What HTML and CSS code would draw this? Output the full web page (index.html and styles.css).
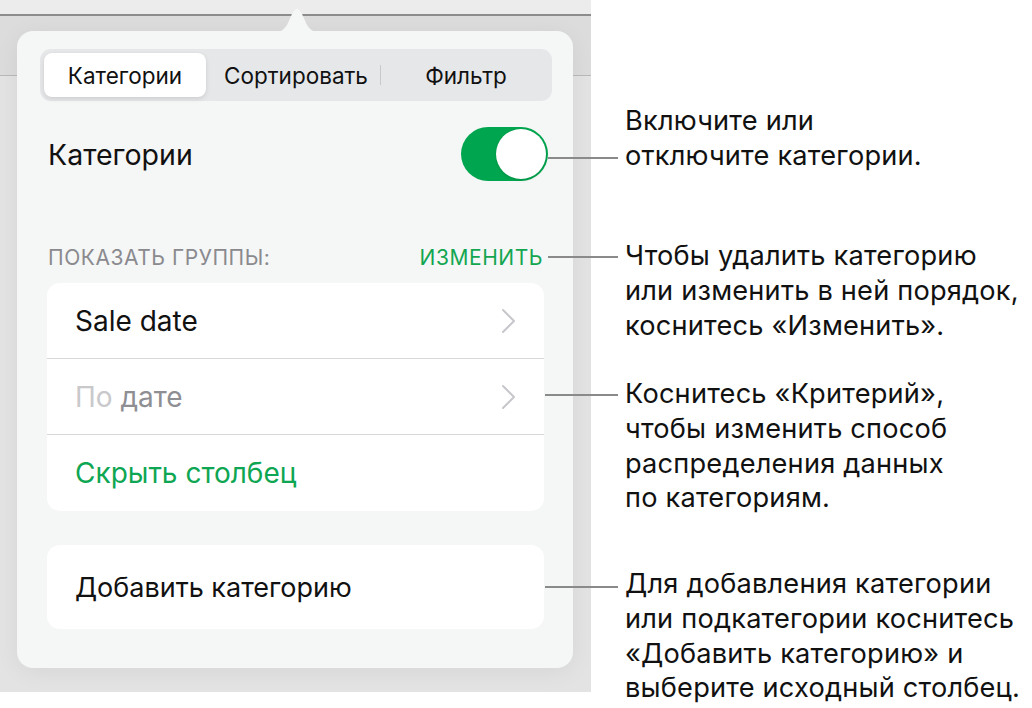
FILE: index.html
```html
<!DOCTYPE html>
<html lang="ru">
<head>
<meta charset="utf-8">
<title>Категории</title>
<link rel="stylesheet" href="styles.css">
</head>
<body>
<div class="page">
  <div class="device">
    <div class="popover">
      <div class="segmented">
        <div class="seg seg-active">Категории</div>
        <div class="seg">Сортировать</div>
        <div class="seg seg-last">Фильтр</div>
      </div>

      <div class="toggle-row">
        <span class="toggle-label">Категории</span>
        <span class="toggle"><span class="knob"></span></span>
      </div>

      <div class="section-head">
        <span class="section-title">ПОКАЗАТЬ ГРУППЫ:</span>
        <span class="section-action">ИЗМЕНИТЬ</span>
      </div>

      <div class="card">
        <div class="row">
          <span class="row-text">Sale date</span>
          <svg class="chev" width="15" height="26" viewBox="0 0 15 26"><path d="M2 2 L13 13 L2 24" fill="none" stroke="#c7c7cc" stroke-width="2" stroke-linecap="round" stroke-linejoin="round"/></svg>
        </div>
        <div class="row">
          <span class="row-text"><span class="faint">По</span> <span class="muted">дате</span></span>
          <svg class="chev" width="15" height="26" viewBox="0 0 15 26"><path d="M2 2 L13 13 L2 24" fill="none" stroke="#c7c7cc" stroke-width="2" stroke-linecap="round" stroke-linejoin="round"/></svg>
        </div>
        <div class="row row-last">
          <span class="row-text green">Скрыть столбец</span>
        </div>
      </div>

      <div class="card card-add">
        <span class="row-text">Добавить категорию</span>
      </div>
    </div>
  </div>

  <div class="callout c1">
    <span class="leader l1"></span>
    <p>Включите или<br>отключите категории.</p>
  </div>
  <div class="callout c2">
    <span class="leader l2"></span>
    <p>Чтобы удалить категорию<br>или изменить в ней порядок,<br>коснитесь «Изменить».</p>
  </div>
  <div class="callout c3">
    <span class="leader l3"></span>
    <p>Коснитесь «Критерий»,<br>чтобы изменить способ<br>распределения данных<br>по категориям.</p>
  </div>
  <div class="callout c4">
    <span class="leader l4"></span>
    <p>Для добавления категории<br>или подкатегории коснитесь<br>«Добавить категорию» и<br>выберите исходный столбец.</p>
  </div>
</div>
</body>
</html>
```

FILE: styles.css
```css
html, body {
  margin: 0;
  padding: 0;
  background: #ffffff;
}

body {
  font-family: Inter, Roboto, "Noto Sans", "Liberation Sans", sans-serif;
  color: #111111;
  width: 1032px;
  height: 708px;
  overflow: hidden;
}

.page {
  position: relative;
  width: 1032px;
  height: 708px;
}

.device {
  width: 591px;
  height: 692px;
  box-sizing: border-box;
  padding: 31px 0 0 17px;
  background:
    linear-gradient(#ececec 0, #ececec 14px, #8c8c8c 14px, #8c8c8c 16px, #dcdcdc 16px, #dcdcdc 75px, #b9b9b9 75px, #b9b9b9 76px, #e3e3e3 76px, #e3e3e3 100%);
}

.popover {
  position: relative;
  width: 556px;
  height: 637px;
  box-sizing: border-box;
  padding: 18px 21px 0 23px;
  background: #f5f6f6;
  border-radius: 16px;
  box-shadow: 0 4px 24px rgba(0, 0, 0, 0.06);
}

.popover::before {
  content: "";
  position: absolute;
  left: 252px;
  top: -22px;
  width: 56px;
  height: 24px;
  background: #f5f6f6;
  clip-path: path("M0 24 C10 24 14 22 18 16 L23 5 C25 1 27 0 28 0 C29 0 31 1 33 5 L38 16 C42 22 46 24 56 24 Z");
}

/* segmented control */
.segmented {
  display: grid;
  grid-template-columns: 1fr 1fr 1fr;
  height: 52px;
  box-sizing: border-box;
  padding: 4px;
  background: #e6e7e9;
  border-radius: 11px;
}

.seg {
  display: flex;
  align-items: center;
  justify-content: center;
  font-size: 22.5px;
  color: #111111;
  position: relative;
}

.seg-active {
  background: #ffffff;
  border-radius: 8px;
  margin-right: 6px;
  box-shadow: 0 2px 5px rgba(0, 0, 0, 0.10), 0 0 1px rgba(0, 0, 0, 0.08);
}

.seg-last {
  padding-left: 4px;
}

.seg-last::before {
  content: "";
  position: absolute;
  left: 0;
  top: 12px;
  bottom: 12px;
  width: 1px;
  background: #c9c9cc;
}

/* toggle row */
.toggle-row {
  display: flex;
  align-items: center;
  justify-content: space-between;
  margin-top: 26px;
  height: 54px;
  padding: 0 4px 0 8px;
}

.toggle-label {
  font-size: 28.5px;
  color: #111111;
}

.toggle {
  display: flex;
  align-items: center;
  justify-content: flex-end;
  width: 87px;
  height: 54px;
  box-sizing: border-box;
  padding: 2px;
  background: #00a64f;
  border-radius: 27px;
}

.knob {
  width: 50px;
  height: 50px;
  border-radius: 50%;
  background: #ffffff;
  box-shadow: 0 1px 3px rgba(0, 0, 0, 0.15);
}

/* section header */
.section-head {
  display: flex;
  justify-content: space-between;
  align-items: center;
  margin-top: 66px;
  height: 20px;
  padding: 0 9px 0 8px;
  font-size: 21px;
  letter-spacing: 0.55px;
}

.section-title {
  color: #8a8a8e;
}

.section-action {
  color: #13a651;
}

/* cards */
.card {
  margin: 16px 8px 0 7px;
  background: #ffffff;
  border-radius: 13px;
}

.row {
  display: flex;
  align-items: center;
  justify-content: space-between;
  height: 75px;
  padding: 0 28px 0 28px;
  border-bottom: 1px solid #d8d8da;
}

.row-last {
  border-bottom: none;
  height: 76px;
}

.row-text {
  font-size: 28px;
  color: #111111;
}

.faint {
  color: #c9c9cc;
}

.muted {
  color: #8e8e93;
}

.green {
  color: #0ea652;
}

.chev {
  display: block;
}

.card-add {
  display: flex;
  align-items: center;
  height: 84px;
  margin-top: 34px;
  padding-left: 28px;
}

.card-add .row-text {
  font-size: 27px;
}

/* callouts */
.callout {
  position: absolute;
  left: 548px;
  display: flex;
  align-items: flex-start;
}

.callout p {
  margin: 0;
  font-size: 27.2px;
  line-height: 34.8px;
  color: #111111;
  letter-spacing: 0.2px;
}

.leader {
  display: block;
  width: 70px;
  height: 2px;
  background: #8a8a8a;
  margin-right: 7px;
}

.c1 { top: 104px; }
.l1 { margin-top: 53px; }

.c2 { top: 239px; }
.l2 { margin-top: 17px; }

.c3 { top: 377px; left: 545px; }
.l3 { margin-top: 17px; width: 73px; }

.c4 { top: 567px; left: 545px; }
.l4 { margin-top: 19px; width: 73px; }
```
